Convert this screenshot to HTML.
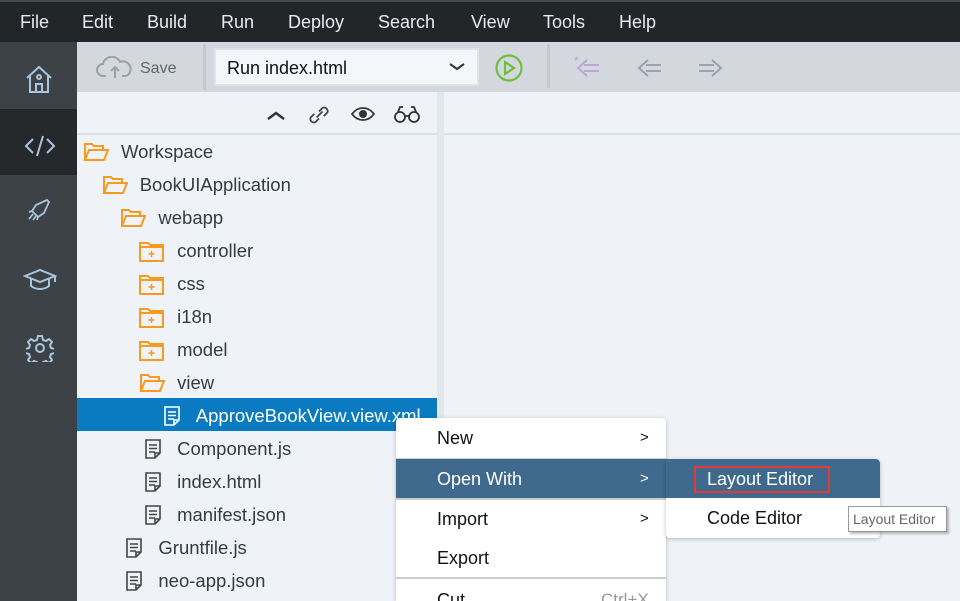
<!DOCTYPE html>
<html style="width:960px;height:601px;overflow:hidden"><head><meta charset="utf-8"><style>
*{margin:0;padding:0;box-sizing:border-box}
body{width:960px;height:601px;overflow:hidden;background:#eff3f7;font-family:"Liberation Sans",Arial,sans-serif;position:relative}
.abs{position:absolute}
#menubar{left:0;top:0;width:960px;height:42px;background:#232629;border-top:2px solid #454a52}
#menubar span{position:absolute;top:10px;color:#e8ecf0;font-size:18px}
#side{left:0;top:42px;width:77px;height:559px;background:#3c4245}
#toolbar{left:77px;top:42px;width:883px;height:50px;background:#d4d8de}
.ico{position:absolute}
.row{position:absolute;left:77px;width:360px;height:33px;font-size:18.5px;color:#333b44;line-height:33px}
.row span{position:absolute}
.row svg{position:absolute;top:7px}
.menu{position:absolute;background:#fff;box-shadow:0 1px 4px rgba(0,0,0,.25);border-radius:4px;overflow:hidden}
.mi{position:absolute;left:0;width:270px;height:40px;font-size:18px;line-height:40px;color:#111}
.mi span{position:absolute;left:41px}
.mi b{position:absolute;left:244px;font-weight:normal;font-size:15px}
</style></head><body>
<div id="menubar" class="abs">
<span style="left:20px">File</span><span style="left:82px">Edit</span><span style="left:147px">Build</span><span style="left:221px">Run</span><span style="left:288px">Deploy</span><span style="left:378px">Search</span><span style="left:471px">View</span><span style="left:543px">Tools</span><span style="left:619px">Help</span>
</div>
<div id="side" class="abs">
<div class="abs" style="left:0;top:67px;width:77px;height:66px;background:#25292c"></div>
<svg class="ico" style="left:25px;top:22px" width="28" height="30" viewBox="0 0 28 30" fill="none" stroke="#a9c4dd" stroke-width="2"><path d="M2 14L14 3l12 11M5 12v16h18V12M11 28v-8h6v8"/><circle cx="14" cy="13" r="2"/></svg>
<svg class="ico" style="left:24px;top:92px" width="32" height="24" viewBox="0 0 32 24" fill="none" stroke="#a9c4dd" stroke-width="2"><path d="M9 5L2 12l7 7M23 5l7 7-7 7M19 2L13 22"/></svg>
<svg class="ico" style="left:27px;top:155px" width="24" height="26" viewBox="0 0 24 26" fill="none" stroke="#a9c4dd" stroke-width="1.8"><path d="M20 3L9 8l-4 6 6 6 6-4 5-11zM5 14l-3 1M11 20l-1 3M6 17l-4 5M9 19l-3 4"/></svg>
<svg class="ico" style="left:23px;top:225px" width="34" height="24" viewBox="0 0 34 24" fill="none" stroke="#a9c4dd" stroke-width="2"><path d="M2 9L17 3l15 6-15 6z M8 12v7c5 4 13 4 18 0v-7M32 9v6"/></svg>
<svg class="ico" style="left:26px;top:292px" width="28" height="28" viewBox="0 0 28 28" fill="none" stroke="#a9c4dd" stroke-width="2"><path d="M12 2h4l1 4 3 1 3-2 3 3-2 3 1 3 4 1v4l-4 1-1 3 2 3-3 3-3-2-3 1-1 4h-4l-1-4-3-1-3 2-3-3 2-3-1-3-4-1v-4l4-1 1-3-2-3 3-3 3 2 3-1z"/><circle cx="14" cy="14" r="4"/></svg>
</div>
<div id="toolbar" class="abs">
<svg class="ico" style="left:19px;top:14px" width="38" height="24" viewBox="0 0 38 24" fill="none" stroke="#9aa2ab" stroke-width="2"><path d="M10 20H7a6 6 0 010-12 9 9 0 0117-2 7 7 0 016 14h-4M19 22v-10M15 15l4-4 4 4"/></svg>
<span class="abs" style="left:63px;top:18px;font-size:16px;color:#5c656e">Save</span>
<div class="abs" style="left:126px;top:2px;width:3px;height:46px;background:#c5cad1"></div>
<div class="abs" style="left:137px;top:6px;width:265px;height:38px;background:#f4f6f9;border:2px solid #dfe3e8"></div>
<span class="abs" style="left:150px;top:16px;font-size:18px;color:#111">Run index.html</span>
<svg class="ico" style="left:372px;top:20px" width="16" height="10"><path d="M1 2l7 5 7-5" fill="none" stroke="#333" stroke-width="2"/></svg>
<svg class="ico" style="left:418px;top:12px" width="28" height="28" viewBox="0 0 28 28" fill="none" stroke="#6cbf3d" stroke-width="2.2"><circle cx="14" cy="14" r="12.5"/><path d="M10 8v12l9-6z"/></svg>
<div class="abs" style="left:470px;top:2px;width:3px;height:44px;background:#c5cad1"></div>
<svg class="ico" style="left:496px;top:14px" width="32" height="24" viewBox="0 0 32 24" fill="none" stroke="#b9a9d2" stroke-width="2"><path d="M14 4L5 12l9 8M11 9h15M11 15h15"/><text x="1" y="9" font-size="12" fill="#b9a9d2" stroke="none">*</text></svg>
<svg class="ico" style="left:558px;top:14px" width="32" height="24" viewBox="0 0 32 24" fill="none" stroke="#9aa2ab" stroke-width="2"><path d="M13 4L4 12l9 8M11 9h15M11 15h15"/></svg>
<svg class="ico" style="left:618px;top:14px" width="32" height="24" viewBox="0 0 32 24" fill="none" stroke="#9aa2ab" stroke-width="2"><path d="M17 4l9 8-9 8M4 9h15M4 15h15"/></svg>
</div>
<div class="abs" style="left:437px;top:92px;width:7px;height:509px;background:#e2e7ec"></div>
<div class="abs" style="left:77px;top:133px;width:360px;height:2px;background:#dde2e8"></div>
<div class="abs" style="left:444px;top:133px;width:516px;height:2px;background:#dde2e8"></div>
<svg class="ico" style="left:266px;top:110px" width="20" height="12"><path d="M2 9l8-6 8 6" fill="none" stroke="#333" stroke-width="2.5"/></svg>
<svg class="ico" style="left:306px;top:102px" width="26" height="26" viewBox="0 0 22 22" fill="none" stroke="#444" stroke-width="1.5"><path d="M9 13l5-5M7 10l-3 3a3 3 0 004 4l3-3M15 12l3-3a3 3 0 00-4-4l-3 3"/></svg>
<svg class="ico" style="left:351px;top:106px" width="24" height="16" viewBox="0 0 24 16"><path d="M1 8c6-8 16-8 22 0-6 8-16 8-22 0z" fill="none" stroke="#333" stroke-width="1.8"/><circle cx="12" cy="8" r="4" fill="#333"/></svg>
<svg class="ico" style="left:394px;top:104px" width="26" height="20" viewBox="0 0 26 20" fill="none" stroke="#333" stroke-width="1.8"><circle cx="6" cy="13" r="5"/><circle cx="20" cy="13" r="5"/><path d="M4 8l2-5h3M22 8l-2-5h-3M11 12h4"/></svg>

<div class="row" style="top:398px;background:#0a7bc1"></div>
<div id="tree"></div>
<script>
var O='<svg width="26" height="20" viewBox="0 0 26 20" fill="none" stroke="#f79a1e" stroke-width="2"><path d="M2 18V2h7l2 2h9v4M2 18h19l4-10H6z"/></svg>';
var C='<svg width="26" height="22" viewBox="0 0 26 22" fill="none" stroke="#f79a1e" stroke-width="2"><path d="M1 2h8l2 2h13v16H1zM1 6h23"/><path d="M12.5 10v6M9.5 13h6" stroke-width="1.5"/></svg>';
function F(c){return '<svg width="20" height="20" viewBox="0 0 20 20" fill="none" stroke="'+c+'" stroke-width="1.6"><path d="M3 1h14v13l-5 5H3zM6 6h8M6 9.5h8M6 13h6M12 19v-5h5"/></svg>';}
var rows=[[0,O,'Workspace'],[1,O,'BookUIApplication'],[2,O,'webapp'],[3,C,'controller'],[3,C,'css'],[3,C,'i18n'],[3,C,'model'],[3,O,'view'],[4,F('#fff'),'ApproveBookView.view.xml',1],[3,F('#444'),'Component.js'],[3,F('#444'),'index.html'],[3,F('#444'),'manifest.json'],[2,F('#444'),'Gruntfile.js'],[2,F('#444'),'neo-app.json']];
var h='';rows.forEach(function(r,i){var x=6+r[0]*18.7,t=135+i*33;var fx=(r[1]===O||r[1]===C)?x:x+4;
h+='<div class="row" style="top:'+t+'px'+(r[3]?';color:#fff':'')+'"><span style="left:'+fx+'px;top:0;width:26px;height:33px">'+r[1]+'</span><span style="left:'+(x+38)+'px">'+r[2]+'</span></div>';});
document.getElementById('tree').innerHTML=h;
</script>

<div class="menu" style="left:396px;top:418px;width:270px;height:183px;border-radius:4px 4px 0 0">
<div class="mi" style="top:0"><span>New</span><b>&gt;</b></div>
<div class="abs" style="left:0;top:40px;width:270px;height:1px;background:#ccc"></div>
<div class="mi" style="top:41px;height:39px;background:#3f6a8d;color:#fff"><span>Open With</span><b>&gt;</b></div>
<div class="abs" style="left:0;top:80px;width:270px;height:2px;background:#ccc"></div>
<div class="mi" style="top:81px"><span>Import</span><b>&gt;</b></div>
<div class="mi" style="top:120px"><span>Export</span></div>
<div class="abs" style="left:0;top:159px;width:270px;height:2px;background:#ccc"></div>
<div class="mi" style="top:162px"><span>Cut</span><b style="left:205px;color:#999;font-size:17px">Ctrl+X</b></div>
</div>
<div class="menu" style="left:666px;top:459px;width:214px;height:79px;border-radius:0 4px 4px 4px">
<div class="abs" style="left:0;top:0;width:214px;height:39px;background:#3f6a8d;border-radius:0 4px 0 0"></div>
<div class="abs" style="left:28px;top:7px;width:136px;height:27px;border:2px solid #e5393a"></div>
<span class="abs" style="left:41px;top:10px;font-size:18px;color:#fff">Layout Editor</span>
<span class="abs" style="left:41px;top:49px;font-size:18px;color:#111">Code Editor</span>
</div>
<div class="abs" style="left:848px;top:506px;width:99px;height:26px;background:#fff;border:1px solid #999;box-shadow:2px 2px 2px rgba(0,0,0,.25);font-size:14px;color:#666;padding:4px 0 0 4px">Layout Editor</div>
</body></html>
